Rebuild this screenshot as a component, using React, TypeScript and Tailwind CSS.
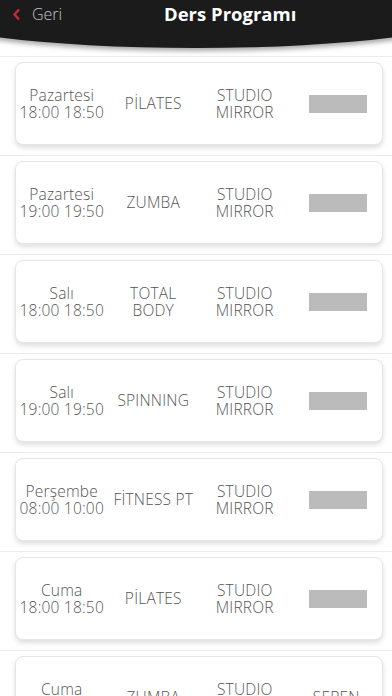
import React from "react";

type Row = { day: string; time?: string; name: string[]; place: string[]; extra?: string };

const rows: Row[] = [
  { day: "Pazartesi", time: "18:00 18:50", name: ["PİLATES"], place: ["STUDIO", "MIRROR"] },
  { day: "Pazartesi", time: "19:00 19:50", name: ["ZUMBA"], place: ["STUDIO", "MIRROR"] },
  { day: "Salı", time: "18:00 18:50", name: ["TOTAL", "BODY"], place: ["STUDIO", "MIRROR"] },
  { day: "Salı", time: "19:00 19:50", name: ["SPINNING"], place: ["STUDIO", "MIRROR"] },
  { day: "Perşembe", time: "08:00 10:00", name: ["FİTNESS PT"], place: ["STUDIO", "MIRROR"] },
  { day: "Cuma", time: "18:00 18:50", name: ["PİLATES"], place: ["STUDIO", "MIRROR"] },
  { day: "Cuma", time: "19:00 19:50", name: ["ZUMBA"], place: ["STUDIO", "MIRROR"], extra: "SEREN" },
];

function Cell({ lines }: { lines: string[] }) {
  return (
    <div className="flex flex-col items-center justify-center text-center leading-[17px]">
      {lines.map((l, i) => (
        <span key={i} className="whitespace-nowrap">{l}</span>
      ))}
    </div>
  );
}

export default function App() {
  return (
    <div
      className="w-[392px] h-[696px] overflow-hidden bg-white"
      style={{ fontFamily: '"Open Sans", "Noto Sans", sans-serif' }}
    >
      <div className="w-[560px] ml-[-84px] h-[48px] bg-[#1b1b1b] rounded-bl-[280px_37px] rounded-br-[280px_37px] shadow-[0_3px_5px_rgba(0,0,0,0.35)] flex">
        <div className="w-[84px]" />
        <div className="w-[392px] flex items-start pt-[2px]">
          <div className="flex items-center h-[24px] pl-[12px] w-[150px]">
            <svg width="9" height="13" viewBox="0 0 9 13" className="mr-[11px]">
              <path d="M7 1.5 L2.5 6.5 L7 11.5" stroke="#c8283c" strokeWidth="2.4" fill="none" />
            </svg>
            <span className="text-[16px] text-[#c4c4c4] font-light">Geri</span>
          </div>
          <div className="text-white font-bold text-[18.5px] leading-[24px] ml-[14px]">Ders Programı</div>
        </div>
      </div>
      <div className="mt-[8px]">
        {rows.map((r, i) => (
          <div key={i} className="border-t border-[#ececec] pt-[5px] pb-[10px]">
            <div className="ml-[15px] mr-[9px] h-[83px] rounded-[8px] border border-[#e6e6e6] bg-white shadow-[0_3px_5px_rgba(0,0,0,0.13)] grid grid-cols-4 items-center text-[15.5px] font-light text-[#555] tracking-[0.2px]">
              <Cell lines={r.time ? [r.day, r.time] : [r.day]} />
              <Cell lines={r.name} />
              <Cell lines={r.place} />
              <div className="flex justify-center">
                {r.extra ? (
                  <span>{r.extra}</span>
                ) : (
                  <div className="w-[58px] h-[18px] bg-[#bbbbbb] ml-[4px]" />
                )}
              </div>
            </div>
          </div>
        ))}
      </div>
    </div>
  );
}
